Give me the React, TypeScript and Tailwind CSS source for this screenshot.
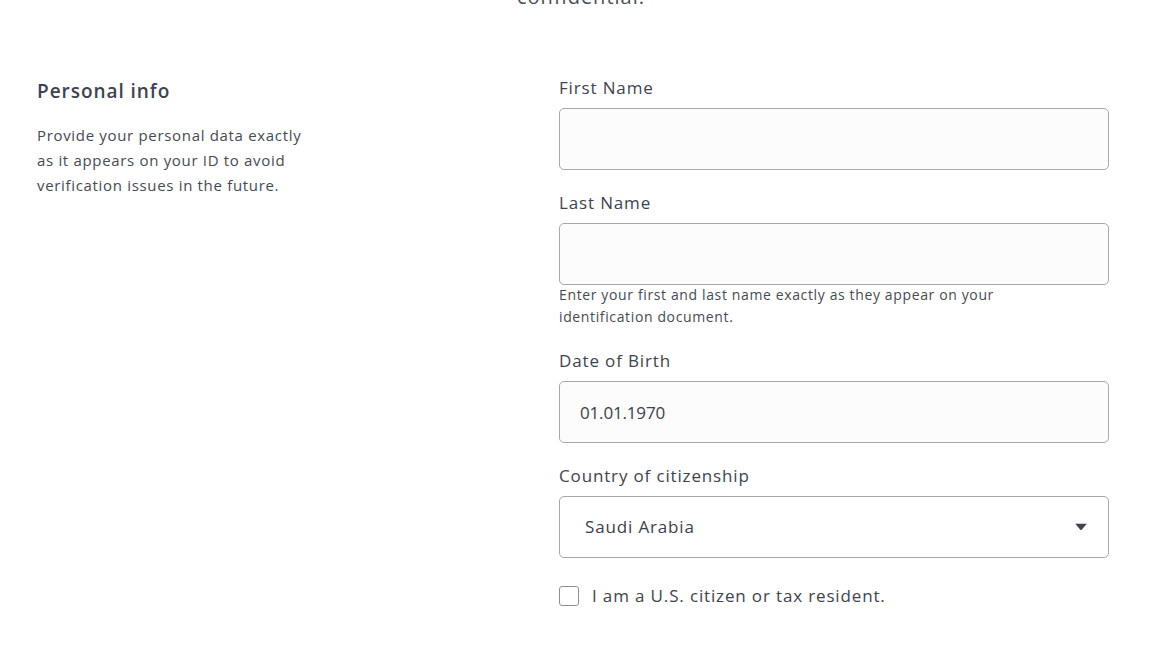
import { useState } from "react";

const font = { fontFamily: '"Open Sans", "Liberation Sans", sans-serif' };

function Field({ label, children }: { label: string; children: React.ReactNode }) {
  return (
    <div className="flex flex-col">
      <label className="text-[17px] leading-5 tracking-[0.05em] text-[#40434f] mb-[10px]">{label}</label>
      {children}
    </div>
  );
}

const inputCls =
  "h-[62px] w-full rounded-[5px] border border-[#a7a8ad] bg-[#fcfcfc] px-5 text-[17px] text-[#3d404c] outline-none";

export default function App() {
  const [us, setUs] = useState(false);

  return (
    <div style={font} className="w-[1160px] h-[646px] overflow-hidden bg-white text-[#40434f]">
      <p className="text-center text-[20px] leading-6 tracking-[0.05em] -mt-[15px] pl-[2px] text-[#4a4d58]">
        confidential.
      </p>

      <div className="grid grid-cols-[522px_550px] pl-[37px] pt-[69px]">
        <div className="pt-[1px]">
          <h2 className="text-[19px] font-semibold leading-6 tracking-[0.05em] text-[#3e4250]">Personal info</h2>
          <p className="mt-[20px] w-[275px] text-[15px] leading-[25px] tracking-[0.045em] text-[#464a55]">
            Provide your personal data exactly as it appears on your ID to avoid verification issues in the future.
          </p>
        </div>

        <div className="flex flex-col gap-[23px]">
          <Field label="First Name">
            <input className={inputCls} />
          </Field>

          <div className="flex flex-col">
            <Field label="Last Name">
              <input className={inputCls} />
            </Field>
            <p className="-mt-[1px] w-[480px] text-[14px] leading-[22px] tracking-[0.045em] text-[#474a55]">
              Enter your first and last name exactly as they appear on your identification document.
            </p>
          </div>

          <Field label="Date of Birth">
            <input className={`${inputCls} h-[61px] tracking-[-0.01em]`} defaultValue="01.01.1970" />
          </Field>

          <Field label="Country of citizenship">
            <div className="relative">
              <select
                className={`${inputCls} appearance-none pl-[25px] bg-white tracking-[0.05em]`}
                defaultValue="sa"
              >
                <option value="sa">Saudi Arabia</option>
              </select>
              <svg
                className="pointer-events-none absolute right-[22px] top-1/2 -translate-y-1/2"
                width="12"
                height="7"
                viewBox="0 0 12 7"
              >
                <path d="M0 0h12L6 7z" fill="#3f424c" />
              </svg>
            </div>
          </Field>

          <label className="mt-[5px] flex items-center gap-[13px] cursor-pointer">
            <input
              type="checkbox"
              checked={us}
              onChange={(e) => setUs(e.target.checked)}
              className="h-5 w-5 appearance-none rounded-[3px] border border-[#8e9097] bg-white"
            />
            <span className="text-[17px] leading-5 tracking-[0.05em] text-[#40434f]">
              I am a U.S. citizen or tax resident.
            </span>
          </label>
        </div>
      </div>
    </div>
  );
}
